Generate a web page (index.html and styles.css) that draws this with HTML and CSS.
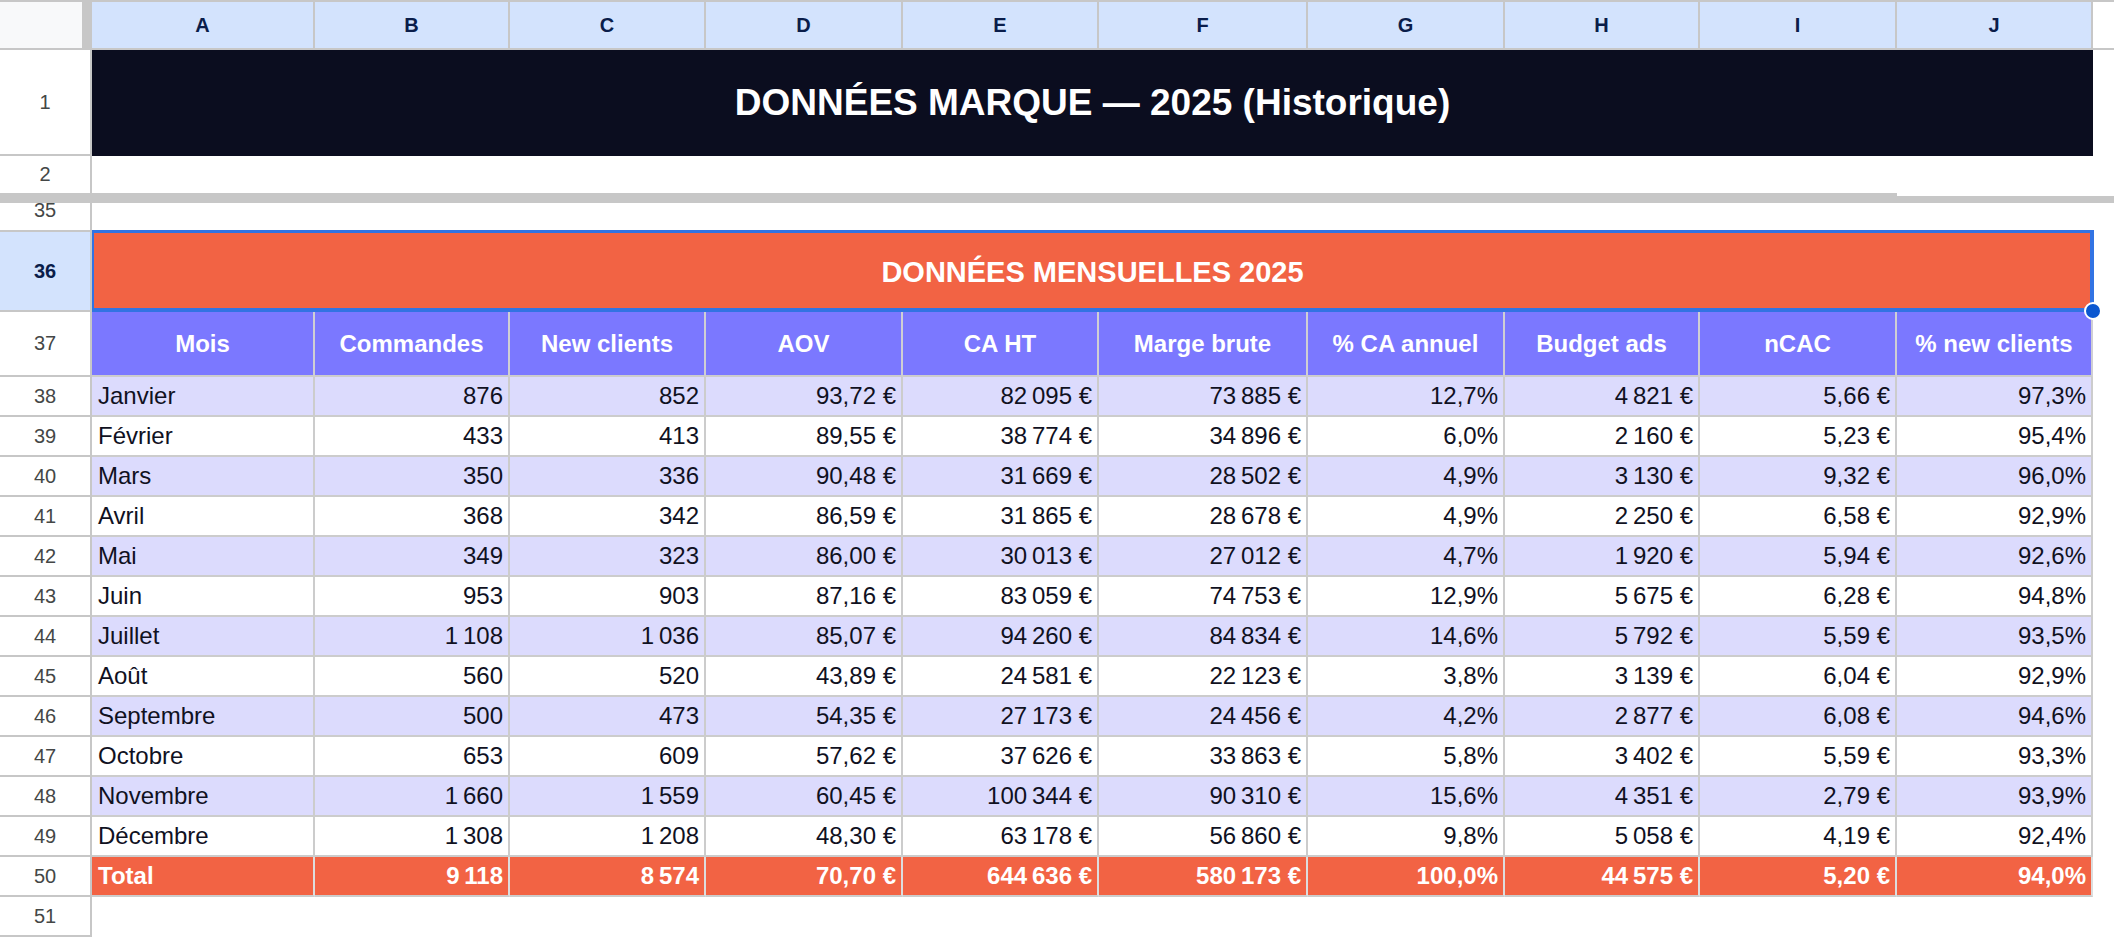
FILE: index.html
```html
<!DOCTYPE html>
<html lang="fr">
<head>
<meta charset="utf-8">
<title>Données marque 2025</title>
<link rel="stylesheet" href="styles.css">
</head>
<body>
<div class="sheet">
  <div class="row colhead">
    <div class="corner"></div>
    <div class="col">A</div><div class="col">B</div><div class="col">C</div><div class="col">D</div><div class="col">E</div>
    <div class="col">F</div><div class="col">G</div><div class="col">H</div><div class="col">I</div><div class="col">J</div>
    <div class="col-fill"></div>
  </div>

  <div class="row r1">
    <div class="rh">1</div>
    <div class="title">DONNÉES MARQUE — 2025 (Historique)</div>
    <div class="fill"></div>
  </div>

  <div class="row r2">
    <div class="rh rh-frozen">2</div>
    <div class="blank-frozen"></div>
    <div class="fill"></div>
  </div>

  <div class="freeze-bar"></div>

  <div class="row r35">
    <div class="rh rh-cut"><span>35</span></div>
    <div class="fill wide"></div>
  </div>

  <div class="row r36">
    <div class="rh rh-sel">36</div>
    <div class="section">
      DONNÉES MENSUELLES 2025
      <div class="selection"></div>
      <div class="handle"></div>
    </div>
    <div class="fill"></div>
  </div>

  <div class="row r37">
    <div class="rh">37</div>
    <div class="th">Mois</div><div class="th">Commandes</div><div class="th">New clients</div><div class="th">AOV</div><div class="th">CA HT</div>
    <div class="th">Marge brute</div><div class="th">% CA annuel</div><div class="th">Budget ads</div><div class="th">nCAC</div><div class="th">% new clients</div>
    <div class="fill"></div>
  </div>

  <div class="row data alt">
    <div class="rh">38</div>
    <div class="td l">Janvier</div><div class="td">876</div><div class="td">852</div><div class="td">93,72 €</div><div class="td">82&#8239;095 €</div>
    <div class="td">73&#8239;885 €</div><div class="td">12,7%</div><div class="td">4&#8239;821 €</div><div class="td">5,66 €</div><div class="td">97,3%</div>
    <div class="fill"></div>
  </div>
  <div class="row data">
    <div class="rh">39</div>
    <div class="td l">Février</div><div class="td">433</div><div class="td">413</div><div class="td">89,55 €</div><div class="td">38&#8239;774 €</div>
    <div class="td">34&#8239;896 €</div><div class="td">6,0%</div><div class="td">2&#8239;160 €</div><div class="td">5,23 €</div><div class="td">95,4%</div>
    <div class="fill"></div>
  </div>
  <div class="row data alt">
    <div class="rh">40</div>
    <div class="td l">Mars</div><div class="td">350</div><div class="td">336</div><div class="td">90,48 €</div><div class="td">31&#8239;669 €</div>
    <div class="td">28&#8239;502 €</div><div class="td">4,9%</div><div class="td">3&#8239;130 €</div><div class="td">9,32 €</div><div class="td">96,0%</div>
    <div class="fill"></div>
  </div>
  <div class="row data">
    <div class="rh">41</div>
    <div class="td l">Avril</div><div class="td">368</div><div class="td">342</div><div class="td">86,59 €</div><div class="td">31&#8239;865 €</div>
    <div class="td">28&#8239;678 €</div><div class="td">4,9%</div><div class="td">2&#8239;250 €</div><div class="td">6,58 €</div><div class="td">92,9%</div>
    <div class="fill"></div>
  </div>
  <div class="row data alt">
    <div class="rh">42</div>
    <div class="td l">Mai</div><div class="td">349</div><div class="td">323</div><div class="td">86,00 €</div><div class="td">30&#8239;013 €</div>
    <div class="td">27&#8239;012 €</div><div class="td">4,7%</div><div class="td">1&#8239;920 €</div><div class="td">5,94 €</div><div class="td">92,6%</div>
    <div class="fill"></div>
  </div>
  <div class="row data">
    <div class="rh">43</div>
    <div class="td l">Juin</div><div class="td">953</div><div class="td">903</div><div class="td">87,16 €</div><div class="td">83&#8239;059 €</div>
    <div class="td">74&#8239;753 €</div><div class="td">12,9%</div><div class="td">5&#8239;675 €</div><div class="td">6,28 €</div><div class="td">94,8%</div>
    <div class="fill"></div>
  </div>
  <div class="row data alt">
    <div class="rh">44</div>
    <div class="td l">Juillet</div><div class="td">1&#8239;108</div><div class="td">1&#8239;036</div><div class="td">85,07 €</div><div class="td">94&#8239;260 €</div>
    <div class="td">84&#8239;834 €</div><div class="td">14,6%</div><div class="td">5&#8239;792 €</div><div class="td">5,59 €</div><div class="td">93,5%</div>
    <div class="fill"></div>
  </div>
  <div class="row data">
    <div class="rh">45</div>
    <div class="td l">Août</div><div class="td">560</div><div class="td">520</div><div class="td">43,89 €</div><div class="td">24&#8239;581 €</div>
    <div class="td">22&#8239;123 €</div><div class="td">3,8%</div><div class="td">3&#8239;139 €</div><div class="td">6,04 €</div><div class="td">92,9%</div>
    <div class="fill"></div>
  </div>
  <div class="row data alt">
    <div class="rh">46</div>
    <div class="td l">Septembre</div><div class="td">500</div><div class="td">473</div><div class="td">54,35 €</div><div class="td">27&#8239;173 €</div>
    <div class="td">24&#8239;456 €</div><div class="td">4,2%</div><div class="td">2&#8239;877 €</div><div class="td">6,08 €</div><div class="td">94,6%</div>
    <div class="fill"></div>
  </div>
  <div class="row data">
    <div class="rh">47</div>
    <div class="td l">Octobre</div><div class="td">653</div><div class="td">609</div><div class="td">57,62 €</div><div class="td">37&#8239;626 €</div>
    <div class="td">33&#8239;863 €</div><div class="td">5,8%</div><div class="td">3&#8239;402 €</div><div class="td">5,59 €</div><div class="td">93,3%</div>
    <div class="fill"></div>
  </div>
  <div class="row data alt">
    <div class="rh">48</div>
    <div class="td l">Novembre</div><div class="td">1&#8239;660</div><div class="td">1&#8239;559</div><div class="td">60,45 €</div><div class="td">100&#8239;344 €</div>
    <div class="td">90&#8239;310 €</div><div class="td">15,6%</div><div class="td">4&#8239;351 €</div><div class="td">2,79 €</div><div class="td">93,9%</div>
    <div class="fill"></div>
  </div>
  <div class="row data">
    <div class="rh">49</div>
    <div class="td l">Décembre</div><div class="td">1&#8239;308</div><div class="td">1&#8239;208</div><div class="td">48,30 €</div><div class="td">63&#8239;178 €</div>
    <div class="td">56&#8239;860 €</div><div class="td">9,8%</div><div class="td">5&#8239;058 €</div><div class="td">4,19 €</div><div class="td">92,4%</div>
    <div class="fill"></div>
  </div>
  <div class="row data total">
    <div class="rh">50</div>
    <div class="td l">Total</div><div class="td">9&#8239;118</div><div class="td">8&#8239;574</div><div class="td">70,70 €</div><div class="td">644&#8239;636 €</div>
    <div class="td">580&#8239;173 €</div><div class="td">100,0%</div><div class="td">44&#8239;575 €</div><div class="td">5,20 €</div><div class="td">94,0%</div>
    <div class="fill"></div>
  </div>
  <div class="row data empty">
    <div class="rh">51</div>
    <div class="fill wide"></div>
  </div>
</div>
</body>
</html>
```

FILE: styles.css
```css
* {
  box-sizing: border-box;
}

html,
body {
  margin: 0;
  padding: 0;
  background: #ffffff;
}

body {
  width: 2114px;
  height: 940px;
  overflow: hidden;
  font-family: "Liberation Sans", Arial, sans-serif;
  color: #10111f;
}

.sheet {
  width: 2114px;
}

.row {
  display: grid;
  grid-template-columns: 92px 223px 195px 196px 197px 196px 209px 197px 195px 197px 196px 1fr;
}

/* ---------- column letters ---------- */
.colhead {
  height: 50px;
  border-top: 2px solid #c7c7c7;
  border-bottom: 2px solid #c7c7c7;
}

.corner {
  background: #f8f9fa;
  border-right: 10px solid #c7c7c7;
}

.col {
  background: #d3e3fd;
  border-right: 2px solid #c7c7c7;
  display: flex;
  align-items: center;
  justify-content: center;
  font-size: 20px;
  font-weight: 700;
  color: #0a1d4a;
}

.col-fill {
  background: #ffffff;
}

/* ---------- row numbers ---------- */
.rh {
  border-right: 2px solid #c7c7c7;
  border-bottom: 2px solid #c7c7c7;
  display: flex;
  align-items: center;
  justify-content: center;
  font-size: 20px;
  color: #444746;
  background: #ffffff;
}

.fill {
  background: #ffffff;
}

.wide {
  grid-column: 2 / -1;
}

/* ---------- row 1 : title ---------- */
.r1 {
  height: 106px;
}

.title {
  grid-column: 2 / 12;
  background: #0b0d1f;
  color: #ffffff;
  font-weight: 700;
  font-size: 37px;
  display: flex;
  align-items: center;
  justify-content: center;
}

/* ---------- row 2 + freeze ---------- */
.r2 {
  height: 40px;
}

.rh-frozen {
  border-bottom-width: 3px;
}

.blank-frozen {
  grid-column: 2 / 11;
  border-bottom: 3px solid #c7c7c7;
}

.r2 .fill {
  grid-column: 11 / -1;
}

.freeze-bar {
  height: 7px;
  background: #c7c7c7;
}

/* ---------- row 35 (cut by freeze) ---------- */
.r35 {
  height: 29px;
}

.rh-cut {
  align-items: flex-start;
  overflow: hidden;
}

.rh-cut span {
  display: block;
  line-height: 20px;
  margin-top: -3px;
}

/* ---------- row 36 : section title ---------- */
.r36 {
  height: 80px;
}

.rh-sel {
  background: #d3e3fd;
  color: #0a1d4a;
  font-weight: 700;
}

.section {
  grid-column: 2 / 12;
  position: relative;
  background: #f26344;
  color: #ffffff;
  font-weight: 700;
  font-size: 29px;
  display: flex;
  align-items: center;
  justify-content: center;
}

.selection {
  position: absolute;
  left: 0;
  top: -2px;
  width: 2002px;
  height: 82px;
  border-style: solid;
  border-color: #3273e3;
  border-width: 3px 4px 4px 2px;
  pointer-events: none;
}

.handle {
  position: absolute;
  left: 1992px;
  top: 70px;
  width: 18px;
  height: 18px;
  border-radius: 50%;
  background: #0b57d0;
  border: 2px solid #ffffff;
  z-index: 2;
}

/* ---------- row 37 : column headings ---------- */
.r37 {
  height: 65px;
}

.th {
  background: #7b78ff;
  color: #ffffff;
  font-weight: 700;
  font-size: 24px;
  border-right: 2px solid #cfcfd4;
  border-bottom: 2px solid #cccccc;
  display: flex;
  align-items: center;
  justify-content: center;
  white-space: nowrap;
}

/* ---------- data rows ---------- */
.data {
  height: 40px;
}

.td {
  background: #ffffff;
  border-right: 2px solid #cccccc;
  border-bottom: 2px solid #cccccc;
  font-size: 24px;
  display: flex;
  align-items: center;
  justify-content: flex-end;
  padding: 0 5px 0 6px;
  white-space: nowrap;
}

.td.l {
  justify-content: flex-start;
}

.alt .td {
  background: #dcdbfd;
}

.total .td {
  background: #f26344;
  color: #ffffff;
  font-weight: 700;
  border-right-color: #dddddd;
  border-bottom-color: #cccccc;
}
```
